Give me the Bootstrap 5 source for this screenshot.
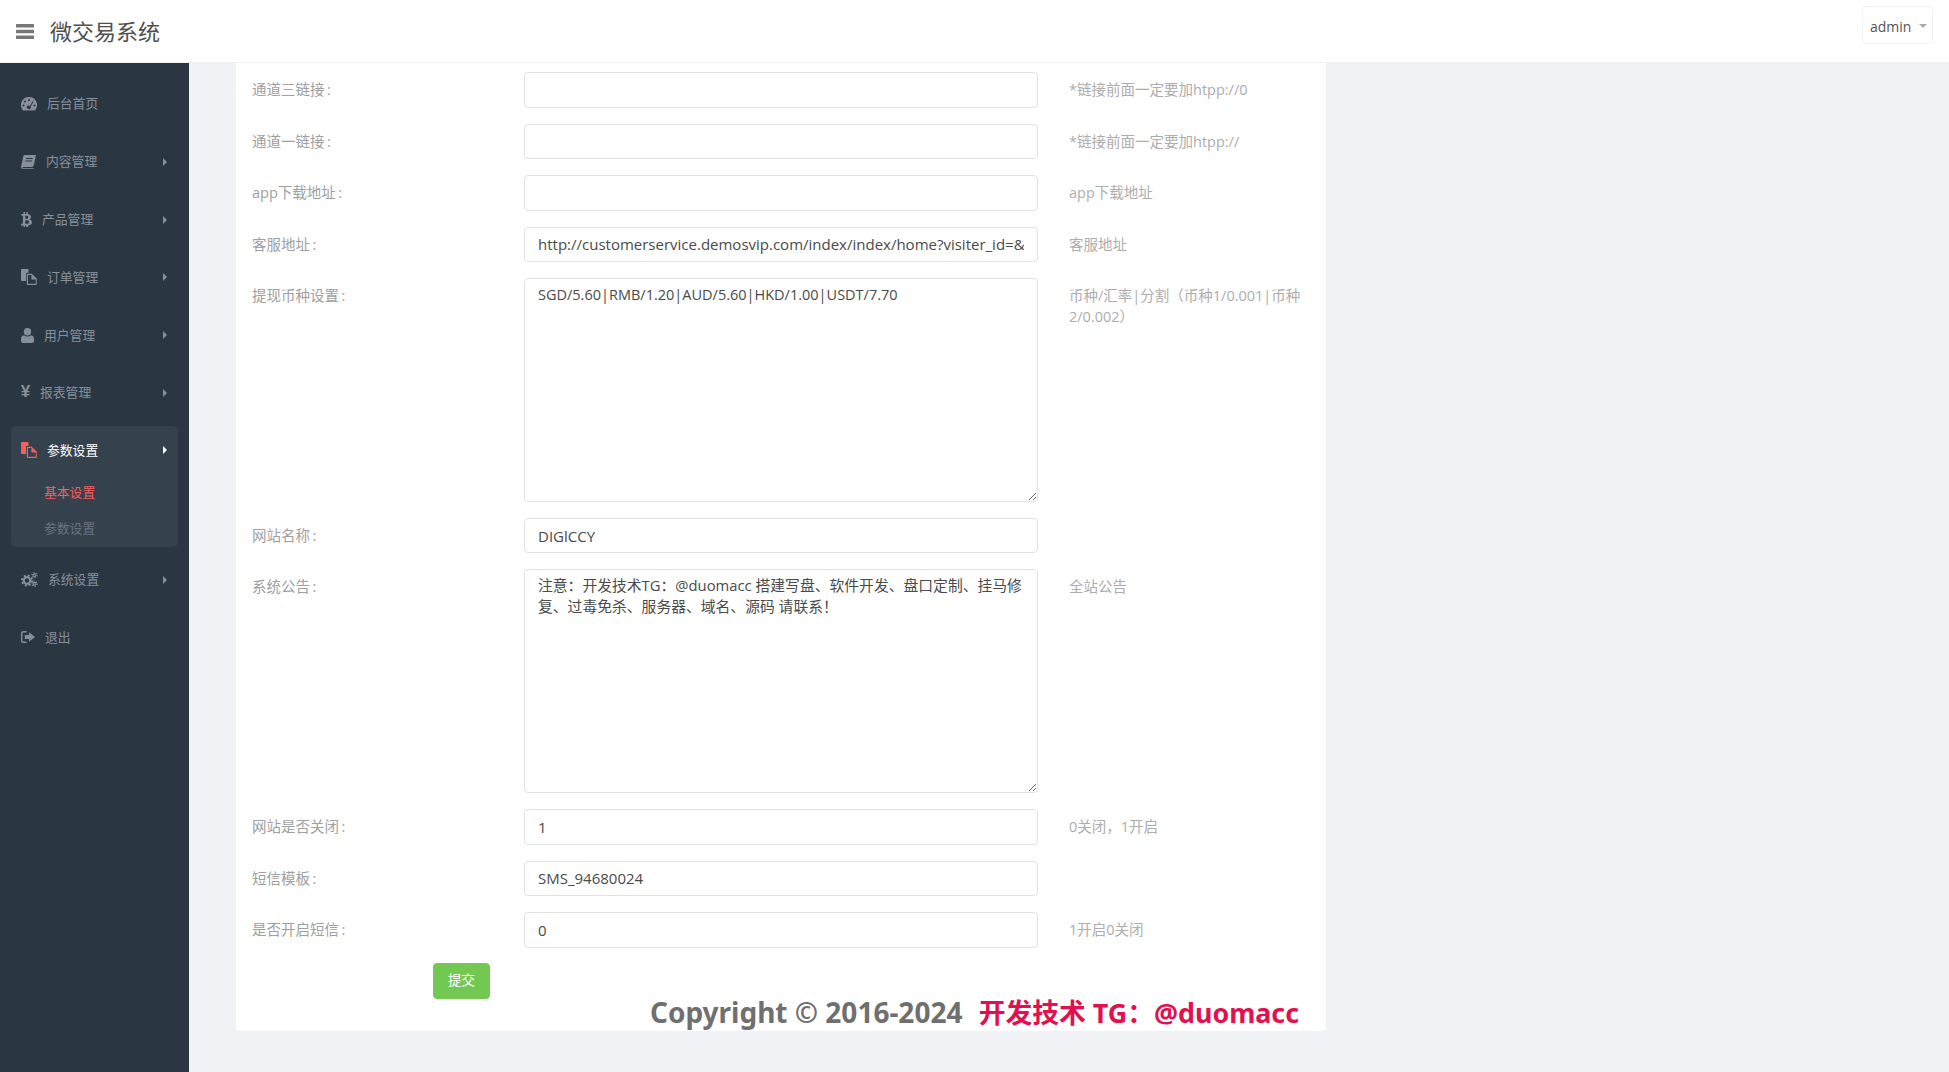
<!DOCTYPE html>
<html lang="zh-CN">
<head>
  <meta charset="UTF-8">
  <title>微交易系统</title>
  <link href="https://cdn.jsdelivr.net/npm/bootstrap@5.3.2/dist/css/bootstrap.min.css" rel="stylesheet">
  <style>
    html, body { height: 100%; overflow: hidden; }
    body { font-family: "Open Sans", "Noto Sans CJK SC", sans-serif; background: #f1f2f5; }

    /* top bar */
    .topbar { height: 63px; background: #fff; border-bottom: 1px solid #eff0f2; padding: 0 16px; }
    .burger { width: 18px; height: 15px; fill: #777; }
    .brand-name { font-size: 22px; color: #4f4f4f; margin-left: 16px; line-height: 1; }
    .user-btn { font-size: 14px; color: #555; background: #fff; border: 1px solid #f2f2f2; height: 38px; width: 71px; padding: 2px 0 0 7px; border-radius: 4px; margin-top: -12px; text-align: left; }
    .user-btn.dropdown-toggle::after { color: #aaa; margin-left: 8px; }

    /* left menu */
    .side-menu { width: 189px; background: #2b3643; padding-top: 16px; gap: 7.8px; }
    .menu-line { height: 50px; margin: 0 11px; padding: 0 11px 0 10px; gap: 10px; color: #87909a; font-size: 12.8px; text-decoration: none; }
    .menu-line svg { fill: currentColor; flex: none; }
    .menu-line .go { margin-left: auto; }
    .yen-sign { font-family: "Liberation Sans", sans-serif; font-weight: 700; font-size: 17px; width: 9px; line-height: 1; margin-top: -2px; display: flex; justify-content: center; }
    .open-group { margin: 0 11px; background: #36414e; border-radius: 5px; }
    .open-group .menu-line { margin: 0; height: 49px; color: #fff; }
    .open-group .menu-line .ic { color: #f0625f; }
    .sub-line { height: 36px; padding-left: 33px; font-size: 12.8px; color: #69737e; text-decoration: none; }
    .sub-line.on { color: #f0625f; }

    /* main panel */
    .work-area { padding-left: 47px; }
    .form-sheet { width: 1090px; background: #fff; padding: 9px 0 1px 16px; border-radius: 0 0 4px 4px; align-self: flex-start; }
    .f-row { margin-bottom: 16px; }
    .f-label { width: 272px; flex: none; font-size: 14.5px; color: #a0a0a0; padding-top: 7px; line-height: 22px; }
    .f-box { width: 514px; flex: none; }
    .f-hint { margin-left: 31px; width: 240px; font-size: 14.5px; color: #adadad; padding-top: 7px; line-height: 21px; }
    .form-control.f-input { height: 35.5px; min-height: 0; font-size: 15px; color: #4a4a4a; border-color: #e2e2e2; border-radius: 4px; padding: 0 13px; }
    .form-control.f-input.h35 { height: 35px; }
    textarea.form-control.f-input { height: 224px; padding: 5px 13px; line-height: 21px; font-size: 14.5px; }
    textarea.form-control.f-input.notice-text { font-size: 14.8px; }
    .submit-wrap { padding-left: 181px; margin-top: -1px; }
    .btn.go-btn { width: 57px; height: 36px; padding: 0; font-size: 13.5px; background: #72c850; border-color: #72c850; color: #fff; border-radius: 4px; }
    .copy-line { margin-top: -4px; padding-right: 27px; text-align: right; font-weight: 700; font-size: 28px; line-height: 34px; color: #6f6f6f; font-family: "Noto Sans", "Noto Sans CJK SC", sans-serif; }
    .copy-line span { color: #e2104e; margin-left: 9px; font-size: 26.8px; }
  </style>
</head>
<body class="d-flex flex-column">

  <header class="topbar d-flex align-items-center flex-none">
    <svg class="burger" viewBox="0 0 18 15"><rect width="18" height="3.4" rx=".5"/><rect y="5.8" width="18" height="3.4" rx=".5"/><rect y="11.6" width="18" height="3.4" rx=".5"/></svg>
    <span class="brand-name">微交易系统</span>
    <div class="dropdown ms-auto">
      <button class="btn user-btn dropdown-toggle" type="button" data-bs-toggle="dropdown">admin</button>
      <ul class="dropdown-menu dropdown-menu-end">
        <li><a class="dropdown-item" href="#">退出</a></li>
      </ul>
    </div>
  </header>

  <div class="d-flex flex-grow-1">
    <nav class="side-menu d-flex flex-column flex-none">
      <a class="menu-line d-flex align-items-center" href="#">
        <svg width="16" height="14" viewBox="0 0 16 14"><path fill-rule="evenodd" d="M8 0a8 8 0 0 1 6.6 12.6l-.6.9H2l-.6-.9A8 8 0 0 1 8 0zM8 2a1 1 0 1 0 0 2 1 1 0 0 0 0-2zM4 3.600a1 1 0 1 0 0 2 1 1 0 0 0 0-2zM2.500 7.500a1 1 0 1 0 0 2 1 1 0 0 0 0-2zM13.500 7.500a1 1 0 1 0 0 2 1 1 0 0 0 0-2zM11.700 4.200 8.700 9a1.700 1.700 0 1 0-1.500 2.800 1.700 1.700 0 0 0 2.400-2.300l2.900-4.800z"/></svg>
        <span>后台首页</span>
      </a>
      <a class="menu-line d-flex align-items-center" href="#">
        <svg width="15" height="14" viewBox="0 0 15 14"><path fill-rule="evenodd" d="M3.500 0H15l-2.300 10.500a2 2 0 0 1-1.900 1.500H2.400c-.6 0-1 .4-1 .7s.4.600 1 .600h10.400l-.2.700H2.200C.9 14 0 13.100 0 12c0-.4 0-.7.200-1L2.300 1.200A1.500 1.500 0 0 1 3.500 0zM5 3l-.2 1h6.700l.2-1zM4.400 5.500l-.2 1h6.700l.2-1z"/></svg>
        <span>内容管理</span>
        <svg class="go" width="4" height="8" viewBox="0 0 4 8"><path d="M0 0l4 4-4 4z"/></svg>
      </a>
      <a class="menu-line d-flex align-items-center" href="#">
        <svg width="11" height="15" viewBox="0 0 11 15"><path fill-rule="evenodd" d="M2.500 0h1.500v2h1.200V0h1.500v2.100c2 .3 3.300 1.200 3.300 3 0 1.200-.6 1.900-1.500 2.300 1.500.4 2.500 1.300 2.500 2.900 0 2.100-1.500 2.900-3.800 3.200V15H5.200v-1.400H4V15H2.500v-1.400H0l.3-1.900h1c.4 0 .6-.2.600-.5V3.900c0-.3-.2-.5-.6-.5H.3V2h2.200zM4.300 3.800v2.900h1.300c1 0 1.700-.4 1.700-1.500S6.600 3.800 5.600 3.800zM4.300 8.300v3.500h1.700c1.200 0 2-.5 2-1.800S7.200 8.300 6 8.300z"/></svg>
        <span>产品管理</span>
        <svg class="go" width="4" height="8" viewBox="0 0 4 8"><path d="M0 0l4 4-4 4z"/></svg>
      </a>
      <a class="menu-line d-flex align-items-center" href="#">
        <svg width="16" height="16" viewBox="0 0 16 16"><path d="M1 0h6.500v3.800H6.200A1.500 1.500 0 0 0 5 5v7H1a1 1 0 0 1-1-1V1a1 1 0 0 1 1-1z"/><path fill-rule="evenodd" d="M6.800 4.800h4l5 5v5.200a1 1 0 0 1-1 1H6.800a1 1 0 0 1-1-1V5.800a1 1 0 0 1 1-1zM7 6v8.800h7.800v-4.300h-4.400V6z"/></svg>
        <span>订单管理</span>
        <svg class="go" width="4" height="8" viewBox="0 0 4 8"><path d="M0 0l4 4-4 4z"/></svg>
      </a>
      <a class="menu-line d-flex align-items-center" href="#">
        <svg width="13" height="15" viewBox="0 0 13 15"><circle cx="6.500" cy="3.700" r="3.700"/><path d="M3 7.200c1 .8 2.200 1.200 3.500 1.200S9 8 10 7.200c2 .2 3 1.800 3 4.300V13a2 2 0 0 1-2 2H2a2 2 0 0 1-2-2v-1.500C0 9 1 7.400 3 7.200z"/></svg>
        <span>用户管理</span>
        <svg class="go" width="4" height="8" viewBox="0 0 4 8"><path d="M0 0l4 4-4 4z"/></svg>
      </a>
      <a class="menu-line d-flex align-items-center" href="#">
        <span class="yen-sign">¥</span>
        <span>报表管理</span>
        <svg class="go" width="4" height="8" viewBox="0 0 4 8"><path d="M0 0l4 4-4 4z"/></svg>
      </a>
      <div class="open-group">
        <a class="menu-line d-flex align-items-center" href="#">
          <svg class="ic" width="16" height="16" viewBox="0 0 16 16"><path d="M1 0h6.500v3.800H6.200A1.500 1.500 0 0 0 5 5v7H1a1 1 0 0 1-1-1V1a1 1 0 0 1 1-1z"/><path fill-rule="evenodd" d="M6.800 4.800h4l5 5v5.200a1 1 0 0 1-1 1H6.800a1 1 0 0 1-1-1V5.800a1 1 0 0 1 1-1zM7 6v8.800h7.800v-4.300h-4.400V6z"/></svg>
          <span>参数设置</span>
          <svg class="go" width="4" height="8" viewBox="0 0 4 8"><path d="M0 0l4 4-4 4z"/></svg>
        </a>
        <a class="sub-line on d-flex align-items-center" href="#">基本设置</a>
        <a class="sub-line d-flex align-items-center" href="#">参数设置</a>
      </div>
      <a class="menu-line d-flex align-items-center" href="#">
        <svg width="17" height="15" viewBox="0 0 17 15"><g fill="none" stroke="currentColor"><circle cx="6" cy="8.500" r="3.300" stroke-width="2.200"/><circle cx="6" cy="8.500" r="5" stroke-width="2" stroke-dasharray="2 1.930"/><circle cx="13.500" cy="3.200" r="1.400" stroke-width="1.200"/><circle cx="13.500" cy="3.200" r="2.600" stroke-width="1.200" stroke-dasharray="1.200 1.520"/><circle cx="13.500" cy="11.800" r="1.400" stroke-width="1.200"/><circle cx="13.500" cy="11.800" r="2.600" stroke-width="1.200" stroke-dasharray="1.200 1.520"/></g></svg>
        <span>系统设置</span>
        <svg class="go" width="4" height="8" viewBox="0 0 4 8"><path d="M0 0l4 4-4 4z"/></svg>
      </a>
      <a class="menu-line d-flex align-items-center" href="#">
        <svg width="14" height="12" viewBox="0 0 14 12"><path d="M5.500 0v1.400H2.600c-.7 0-1.200.5-1.200 1.200v6.800c0 .7.500 1.200 1.200 1.200h2.900V12H2.500A2.500 2.500 0 0 1 0 9.500v-7A2.500 2.500 0 0 1 2.500 0z"/><path d="M8 1.200 14 6l-6 4.800V8H3.800V4H8z"/></svg>
        <span>退出</span>
      </a>
    </nav>

    <main class="work-area flex-grow-1 d-flex">
      <form class="form-sheet">
        <div class="f-row d-flex">
          <label class="f-label">通道三链接&#8201;:</label>
          <div class="f-box"><input class="form-control f-input" type="text"></div>
          <div class="f-hint">*链接前面一定要加htpp://0</div>
        </div>
        <div class="f-row d-flex">
          <label class="f-label">通道一链接&#8201;:</label>
          <div class="f-box"><input class="form-control f-input" type="text"></div>
          <div class="f-hint">*链接前面一定要加htpp://</div>
        </div>
        <div class="f-row d-flex">
          <label class="f-label">app下载地址&#8201;:</label>
          <div class="f-box"><input class="form-control f-input" type="text"></div>
          <div class="f-hint">app下载地址</div>
        </div>
        <div class="f-row d-flex">
          <label class="f-label">客服地址&#8201;:</label>
          <div class="f-box"><input class="form-control f-input" type="text" value="http://customerservice.demosvip.com/index/index/home?visiter_id=&visiter_name=&avatar=&business_id=1"></div>
          <div class="f-hint">客服地址</div>
        </div>
        <div class="f-row d-flex">
          <label class="f-label">提现币种设置&#8201;:</label>
          <div class="f-box"><textarea class="form-control f-input">SGD/5.60|RMB/1.20|AUD/5.60|HKD/1.00|USDT/7.70</textarea></div>
          <div class="f-hint">币种/汇率|分割（币种1/0.001|币种<br>2/0.002）</div>
        </div>
        <div class="f-row d-flex">
          <label class="f-label">网站名称&#8201;:</label>
          <div class="f-box"><input class="form-control f-input h35" type="text" value="DIGlCCY"></div>
        </div>
        <div class="f-row d-flex">
          <label class="f-label">系统公告&#8201;:</label>
          <div class="f-box"><textarea class="form-control f-input notice-text">注意：开发技术TG：@duomacc 搭建写盘、软件开发、盘口定制、挂马修复、过毒免杀、服务器、域名、源码 请联系！</textarea></div>
          <div class="f-hint">全站公告</div>
        </div>
        <div class="f-row d-flex">
          <label class="f-label">网站是否关闭&#8201;:</label>
          <div class="f-box"><input class="form-control f-input" type="text" value="1"></div>
          <div class="f-hint">0关闭，1开启</div>
        </div>
        <div class="f-row d-flex">
          <label class="f-label">短信模板&#8201;:</label>
          <div class="f-box"><input class="form-control f-input" type="text" value="SMS_94680024"></div>
        </div>
        <div class="f-row d-flex">
          <label class="f-label">是否开启短信&#8201;:</label>
          <div class="f-box"><input class="form-control f-input" type="text" value="0"></div>
          <div class="f-hint">1开启0关闭</div>
        </div>
        <div class="submit-wrap">
          <button class="btn go-btn" type="button">提交</button>
        </div>
        <div class="copy-line">Copyright © 2016-2024 <span>开发技术 TG：@duomacc</span></div>
      </form>
    </main>
  </div>

  <script src="https://cdn.jsdelivr.net/npm/bootstrap@5.3.2/dist/js/bootstrap.bundle.min.js"></script>
</body>
</html>
